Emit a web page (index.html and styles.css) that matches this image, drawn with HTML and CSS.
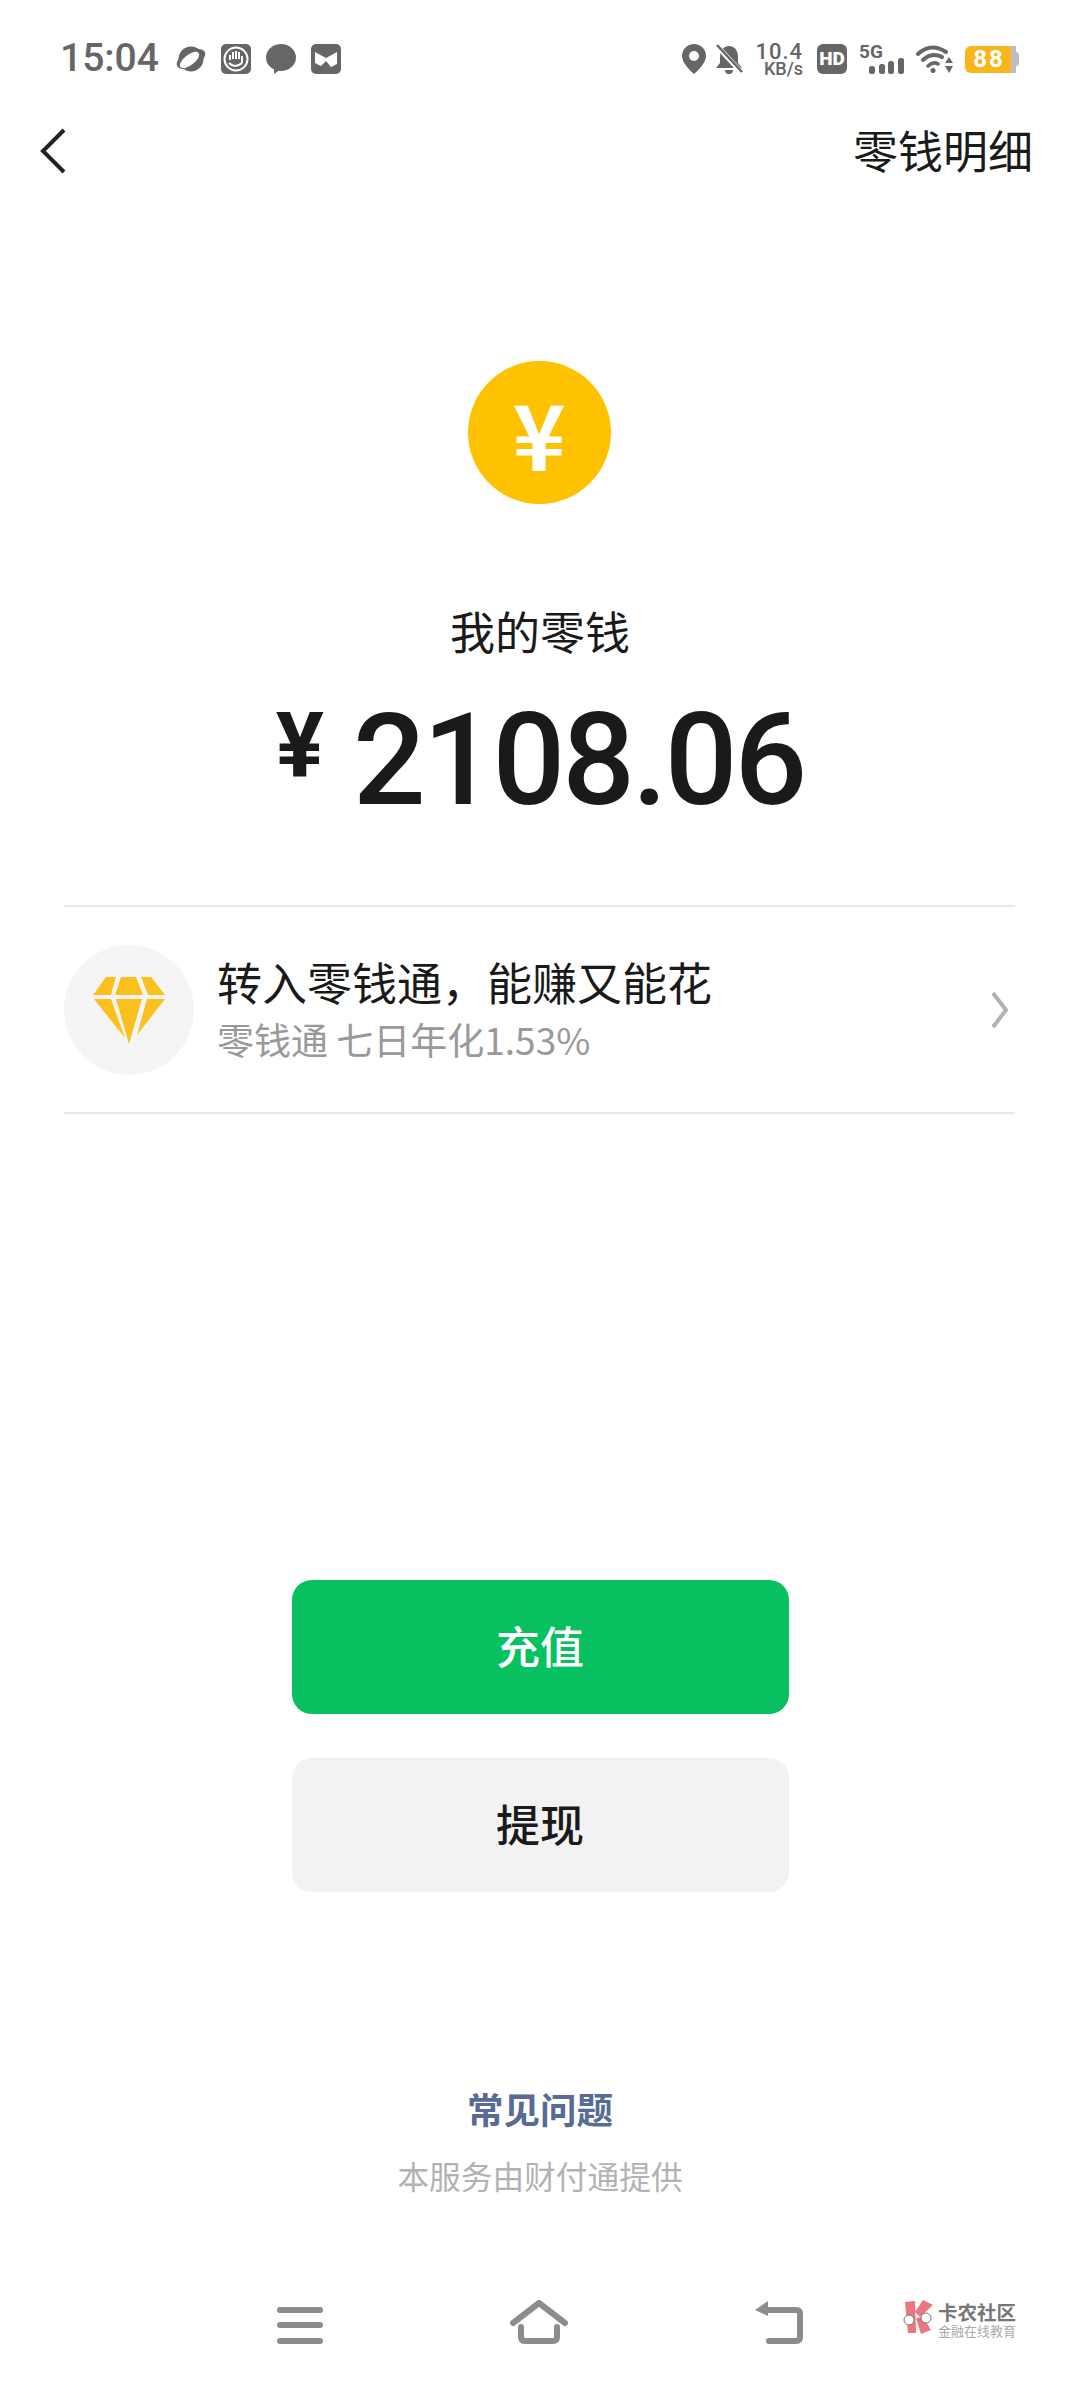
FILE: index.html
```html
<!DOCTYPE html>
<html lang="zh-CN">
  <head>
    <meta charset="UTF-8" />
    <meta name="viewport" content="width=device-width, initial-scale=1.0" />
    <title>我的零钱</title>
    <link rel="stylesheet" href="styles.css">
  </head>
  <body>
    <div class="screen">
      <div class="status-bar">
        <div class="status-left">
          <span class="clock">15:04</span>
          <svg class="app-icon" width="30" height="30" viewBox="0 0 30 30">
            <ellipse cx="15" cy="15" rx="15.5" ry="8" fill="#666" transform="rotate(-27 15 15)" />
            <circle cx="15" cy="15" r="12.5" fill="#666" />
            <ellipse cx="13.5" cy="16" rx="11.5" ry="5.2" fill="#fff" transform="rotate(-38 13.5 16)" />
          </svg>
          <svg class="app-icon" width="30" height="30" viewBox="0 0 30 30">
            <rect width="30" height="30" rx="5" fill="#666" />
            <circle cx="15" cy="15" r="11.5" fill="none" stroke="#fff" stroke-width="2" />
            <path d="M9 16V11M12 15V8M15 15V7M18 15V8M21 19V12M8 19Q14 25 21 19" fill="none" stroke="#fff" stroke-width="2" />
          </svg>
          <svg class="app-icon" width="30" height="30" viewBox="0 0 30 30">
            <ellipse cx="15" cy="13.5" rx="15" ry="13.5" fill="#666" />
            <path d="M8 23L8 30L15 25Z" fill="#666" />
          </svg>
          <svg class="app-icon" width="30" height="30" viewBox="0 0 30 30">
            <rect width="30" height="30" rx="5" fill="#666" />
            <path d="M4 8L15 14L26 8V20L20 23L15 17L10 22L4 19Z" fill="#fff" />
          </svg>
        </div>
        <div class="status-right">
          <svg width="24" height="30" viewBox="0 0 24 30">
            <path d="M12 0A12 12 0 0 1 24 12C24 20 12 30 12 30S0 20 0 12A12 12 0 0 1 12 0Z" fill="#666" />
            <circle cx="12" cy="12" r="5" fill="#fff" />
          </svg>
          <svg class="bell" width="28" height="30" viewBox="0 0 28 30">
            <path d="M14 2C8 2 5 7 5 13V19L1 24H27L23 19V13C23 7 20 2 14 2ZM10 26H18A4 4 0 0 1 10 26Z" fill="#666" />
            <path d="M1 1L27 29" stroke="#fff" stroke-width="5" />
            <path d="M2 1L27 28" stroke="#666" stroke-width="2.5" />
          </svg>
          <div class="net-speed">
            <span class="net-value">10.4</span>
            <span class="net-unit">KB/s</span>
          </div>
          <div class="hd-badge">HD</div>
          <div class="signal">
            <span class="signal-label">5G</span>
            <svg width="35" height="16" viewBox="0 0 35 16">
              <rect x="0" y="8" width="6" height="8" rx="2.5" fill="#666" />
              <rect x="10" y="6" width="6" height="10" rx="2.5" fill="#666" />
              <rect x="19" y="3" width="6" height="13" rx="2.5" fill="#666" />
              <rect x="29" y="0" width="6" height="16" rx="2.5" fill="#666" />
            </svg>
          </div>
          <svg width="37" height="28" viewBox="0 0 37 28">
            <path d="M2 9Q15 -3 30 7" fill="none" stroke="#666" stroke-width="4" stroke-linecap="round" />
            <path d="M7 15Q16 7 26 12" fill="none" stroke="#666" stroke-width="4" stroke-linecap="round" />
            <path d="M12 21Q17 16 22 19" fill="none" stroke="#666" stroke-width="3.5" stroke-linecap="round" />
            <circle cx="17" cy="25.5" r="2.5" fill="#666" />
            <path d="M33 12L37 18H29Z M33 28L29 21H37Z" fill="#666" />
          </svg>
          <div class="battery">
            <span class="battery-level">88</span>
            <span class="battery-rest"></span>
            <span class="battery-tip"></span>
          </div>
        </div>
      </div>

      <div class="nav-bar">
        <svg width="26" height="46" viewBox="0 0 26 46">
          <path d="M24 2L3 23L24 44" fill="none" stroke="#222" stroke-width="4" />
        </svg>
        <span class="nav-title">零钱明细</span>
      </div>

      <div class="balance">
        <div class="coin">¥</div>
        <div class="balance-label">我的零钱</div>
        <div class="amount">
          <span class="amount-sign">¥</span>
          <span class="amount-value">2108.06</span>
        </div>
      </div>

      <div class="promo">
        <div class="promo-icon">
          <svg width="72" height="68" viewBox="0 0 72 68">
            <path d="M13 1H23L18 19H0ZM28 1H43L50 19H22ZM48 1H58L72 19H55ZM1 23H18L32 62ZM23 23H49L36 68ZM54 23H72L44 59Z" fill="#fbbf1e" />
          </svg>
        </div>
        <div class="promo-text">
          <div class="promo-title">转入零钱通，能赚又能花</div>
          <div class="promo-sub">零钱通 七日年化1.53%</div>
        </div>
        <svg class="promo-arrow" width="18" height="36" viewBox="0 0 18 36">
          <path d="M2 1L15 18L2 35" fill="none" stroke="#b2b2b2" stroke-width="4" />
        </svg>
      </div>

      <div class="actions">
        <div class="btn btn-primary">充值</div>
        <div class="btn btn-default">提现</div>
      </div>

      <div class="footer">
        <div class="faq">常见问题</div>
        <div class="provider">本服务由财付通提供</div>
      </div>

      <div class="sys-nav">
        <svg width="46" height="37" viewBox="0 0 46 37">
          <rect y="0" width="46" height="6" rx="3" fill="#8c8c8c" />
          <rect y="15" width="46" height="6" rx="3" fill="#8c8c8c" />
          <rect y="31" width="46" height="6" rx="3" fill="#8c8c8c" />
        </svg>
        <svg width="58" height="44" viewBox="0 0 58 44">
          <path d="M3 23L29 3L55 23" fill="none" stroke="#8c8c8c" stroke-width="6" stroke-linecap="round" stroke-linejoin="round" />
          <path d="M11 27V37Q11 41 15 41H43Q47 41 47 37V27" fill="none" stroke="#8c8c8c" stroke-width="6" stroke-linecap="round" />
        </svg>
        <svg width="48" height="43" viewBox="0 0 48 43">
          <path d="M10 9H41Q45 9 45 13V36Q45 40 41 40H14" fill="none" stroke="#8c8c8c" stroke-width="6" stroke-linecap="round" />
          <path d="M13 0L0 9L13 15Z" fill="#8c8c8c" />
        </svg>
      </div>

      <div class="watermark">
        <svg width="32" height="34" viewBox="0 0 32 34">
          <path d="M2 2L12 1L13 33L5 33Z" fill="#ec7580" />
          <path d="M12 12L20 0L30 5L17 17Z" fill="#ec7580" />
          <path d="M13 18L20 17L28 30L18 34Z" fill="#ec7580" />
          <circle cx="6" cy="20" r="5" fill="#fff" stroke="#777" stroke-width="1" />
          <circle cx="23" cy="18" r="5" fill="#fff" stroke="#777" stroke-width="1" />
        </svg>
        <div class="watermark-text">
          <span class="watermark-name">卡农社区</span>
          <span class="watermark-sub">金融在线教育</span>
        </div>
      </div>
    </div>
  </body>
</html>
```

FILE: styles.css
```css
* {
  box-sizing: border-box;
}
body {
  margin: 0;
  background: #fff;
  font-family: "Noto Sans CJK SC", "Noto Sans", sans-serif;
  color: #1a1a1a;
}
.screen {
  position: relative;
  width: 1080px;
  height: 2388px;
  overflow: hidden;
  background: #fff;
}
.status-bar {
  display: flex;
  justify-content: space-between;
  align-items: center;
  height: 118px;
  padding: 0 61px 0 60px;
  color: #666;
}
.status-left,
.status-right {
  display: flex;
  align-items: center;
}
.status-left {
  gap: 15px;
}
.clock {
  font-family: Roboto, sans-serif;
  font-size: 39px;
  font-weight: 500;
  margin-right: 2px;
  padding-bottom: 2px;
}
.status-right {
  gap: 12px;
}
.bell {
  margin-left: -3px;
}
.net-speed {
  display: flex;
  flex-direction: column;
  align-items: flex-end;
  font-family: Roboto, sans-serif;
  font-weight: 500;
}
.net-value {
  font-size: 22px;
  line-height: 19px;
  letter-spacing: 1px;
}
.net-unit {
  font-size: 18px;
  line-height: 15px;
}
.hd-badge {
  width: 30px;
  height: 30px;
  border-radius: 6px;
  margin-left: 2px;
  background: #666;
  color: #fff;
  font-family: Roboto, sans-serif;
  font-size: 19px;
  font-weight: 900;
  line-height: 30px;
  text-align: center;
}
.signal {
  display: flex;
  flex-direction: column;
  width: 45px;
  align-items: flex-end;
}
.signal-label {
  align-self: flex-start;
  font-family: Roboto, sans-serif;
  font-size: 19px;
  font-weight: 700;
  line-height: 13px;
}
.battery {
  display: flex;
  align-items: center;
}
.battery-level {
  width: 46px;
  height: 27px;
  padding-left: 2px;
  border-radius: 6px 0 0 6px;
  background: #f8b51c;
  color: #fff;
  font-family: Roboto, sans-serif;
  font-size: 24px;
  font-weight: 700;
  letter-spacing: 2px;
  line-height: 27px;
  text-align: center;
}
.battery-rest {
  width: 5px;
  height: 27px;
  background: #bdbdbd;
}
.battery-tip {
  width: 3px;
  height: 14px;
  border-radius: 0 3px 3px 0;
  background: #bdbdbd;
}
.nav-bar {
  display: flex;
  justify-content: space-between;
  align-items: center;
  height: 66px;
  padding: 0 47px 0 40px;
}
.nav-title {
  font-size: 45px;
  line-height: 64px;
  padding-bottom: 2px;
}
.balance {
  display: flex;
  flex-direction: column;
  align-items: center;
}
.coin {
  width: 143px;
  height: 143px;
  margin-top: 177px;
  margin-right: 2px;
  border-radius: 50%;
  background: #fec200;
  color: #fff;
  font-size: 90px;
  font-weight: 700;
  line-height: 143px;
  text-align: center;
}
.balance-label {
  margin-top: 97px;
  font-size: 45px;
  line-height: 60px;
}
.amount {
  display: flex;
  align-items: flex-start;
  gap: 29px;
  height: 130px;
  margin-top: 34px;
  font-family: Roboto, sans-serif;
  font-weight: 500;
}
.amount-sign {
  font-size: 90px;
  font-weight: 700;
  line-height: 88px;
  margin-top: 8px;
}
.amount-value {
  font-size: 128px;
  line-height: 130px;
  letter-spacing: -3px;
}
.promo {
  display: flex;
  align-items: center;
  gap: 23px;
  height: 209px;
  margin: 80px 65px 0 64px;
  border-top: 2px solid #e8e8e8;
  border-bottom: 2px solid #e8e8e8;
}
.promo-icon {
  display: flex;
  justify-content: center;
  align-items: center;
  width: 130px;
  height: 130px;
  border-radius: 50%;
  background: #f5f5f5;
}
.promo-text {
  flex: 1;
}
.promo-title {
  font-size: 45px;
  line-height: 58px;
}
.promo-sub {
  font-size: 37px;
  line-height: 56px;
  color: #999;
}
.promo-arrow {
  margin-right: 6px;
}
.actions {
  display: flex;
  flex-direction: column;
  align-items: center;
  gap: 44px;
  margin-top: 466px;
}
.btn {
  width: 497px;
  height: 134px;
  border-radius: 20px;
  font-size: 44px;
  font-weight: 500;
  line-height: 131px;
  text-align: center;
}
.btn-primary {
  background: #07c160;
  color: #fff;
}
.btn-default {
  background: #f2f2f2;
  color: #1a1a1a;
}
.footer {
  display: flex;
  flex-direction: column;
  align-items: center;
  margin-top: 193px;
}
.faq {
  font-size: 36.5px;
  font-weight: 700;
  line-height: 48px;
  color: #576b95;
}
.provider {
  margin-top: 18px;
  font-size: 31.7px;
  line-height: 48px;
  color: #b2b2b2;
}
.sys-nav {
  display: flex;
  align-items: flex-end;
  gap: 187px;
  height: 44px;
  margin-top: 101px;
  padding-left: 277px;
}
.watermark {
  position: absolute;
  top: 2300px;
  left: 903px;
  display: flex;
  align-items: flex-start;
  gap: 3px;
}
.watermark-text {
  display: flex;
  flex-direction: column;
}
.watermark-name {
  font-size: 19.5px;
  font-weight: 700;
  line-height: 24px;
  color: #777;
}
.watermark-sub {
  font-size: 13px;
  line-height: 14px;
  color: #aaa;
}
```
